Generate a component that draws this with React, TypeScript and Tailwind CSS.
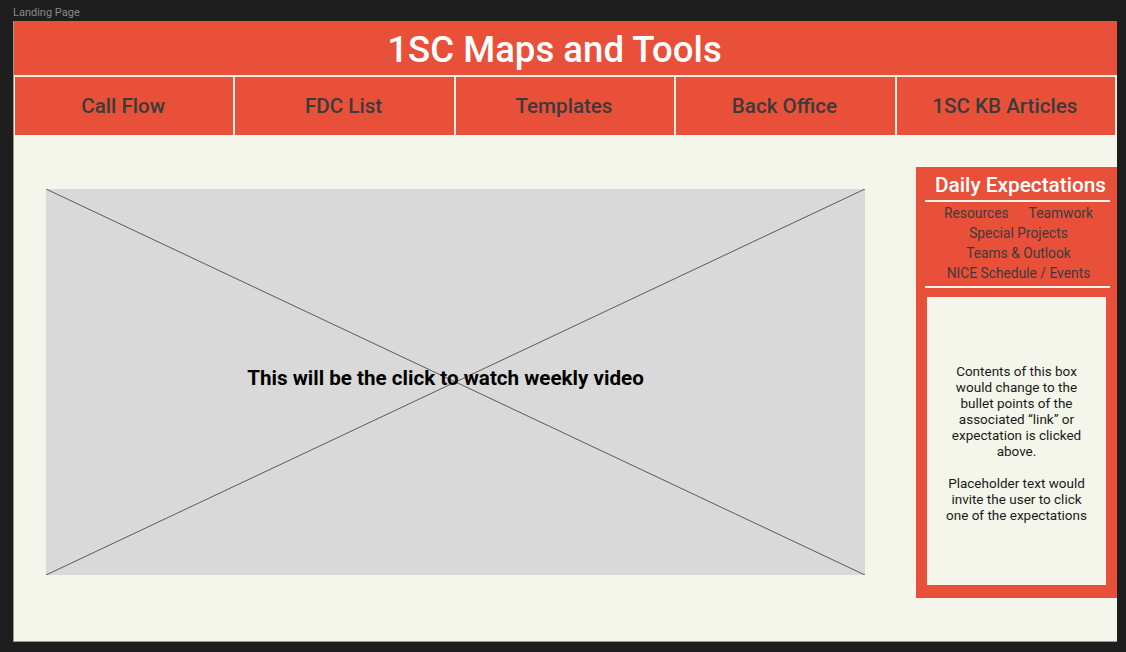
import React from "react";

const navItems = ["Call Flow", "FDC List", "Templates", "Back Office", "1SC KB Articles"];

const App: React.FC = () => {
  return (
    <div
      className="w-[1126px] h-[652px] bg-[#1e1e1e] overflow-hidden"
      style={{ fontFamily: "Roboto, 'Noto Sans', sans-serif" }}
    >
      {/* Frame label */}
      <div className="h-[21px] pl-[13px] pt-[6px] text-[11px] leading-[13px] text-[#8a8a8a]">
        Landing Page
      </div>

      {/* Frame */}
      <div className="ml-[13px] w-[1104px] h-[621px] bg-[#f4f6eb] flex flex-col border-b border-l border-[#9a9a90]">
        {/* Title bar */}
        <div className="h-[54px] bg-[#e9503a] flex items-center justify-center">
          <h1 className="text-[36.6px] font-medium text-white leading-none pt-[4px] pr-[22px]">
            1SC Maps and Tools
          </h1>
        </div>

        {/* Nav */}
        <div className="h-[60px] bg-[#f1ede0] grid grid-cols-5 gap-[2px] pt-[2px] pl-[1px] pr-[2px]">
          {navItems.map((item) => (
            <div
              key={item}
              className="bg-[#e9503a] flex items-center justify-center text-[20.6px] font-medium text-[#3b3b3b] pr-[2px]"
            >
              {item}
            </div>
          ))}
        </div>

        {/* Content */}
        <div className="flex flex-1 pl-[32px]">
          {/* Video placeholder */}
          <div className="mt-[54px] w-[819px] h-[386px] bg-[#d9d9d9] relative flex items-center justify-center">
            <svg
              className="absolute inset-0"
              width="819"
              height="386"
              viewBox="0 0 819 386"
            >
              <line x1="0" y1="0" x2="819" y2="386" stroke="#3a3a3a" strokeWidth="0.8" />
              <line x1="0" y1="386" x2="819" y2="0" stroke="#3a3a3a" strokeWidth="0.8" />
            </svg>
            <span className="relative text-[20.6px] font-bold text-black pr-[20px] pb-[8px]">
              This will be the click to watch weekly video
            </span>
          </div>

          {/* Daily Expectations */}
          <div className="ml-auto mt-[32px] w-[201px] h-[431px] bg-[#e9503a] flex flex-col">
            <div className="pt-[5px] pl-[19px] text-[20.8px] font-medium text-white leading-[26px]">
              Daily Expectations
            </div>
            <div className="ml-[9px] mr-[7px] mt-[2px] h-[2px] bg-[#f4f6eb]" />
            <div className="mt-[1px] flex flex-col items-center text-[13.8px] text-[#3b3b3b] leading-[20px] pl-[4px]">
              <div className="flex gap-[20px]">
                <span>Resources</span>
                <span>Teamwork</span>
              </div>
              <span>Special Projects</span>
              <span>Teams &amp; Outlook</span>
              <span>NICE Schedule / Events</span>
            </div>
            <div className="ml-[9px] mr-[7px] mt-[3px] h-[2px] bg-[#f4f6eb]" />
            <div className="mx-[11px] mt-[9px] mb-[13px] flex-1 bg-[#f4f6eb] flex items-center justify-center px-[14px]">
              <p className="text-[13.5px] leading-[16px] text-[#1a1a1a] text-center pt-[4px]">
                Contents of this box would change to the bullet points of the associated “link” or expectation is clicked above.
                <br />
                <br />
                Placeholder text would invite the user to click one of the expectations
              </p>
            </div>
          </div>
        </div>
      </div>
    </div>
  );
};

export default App;
